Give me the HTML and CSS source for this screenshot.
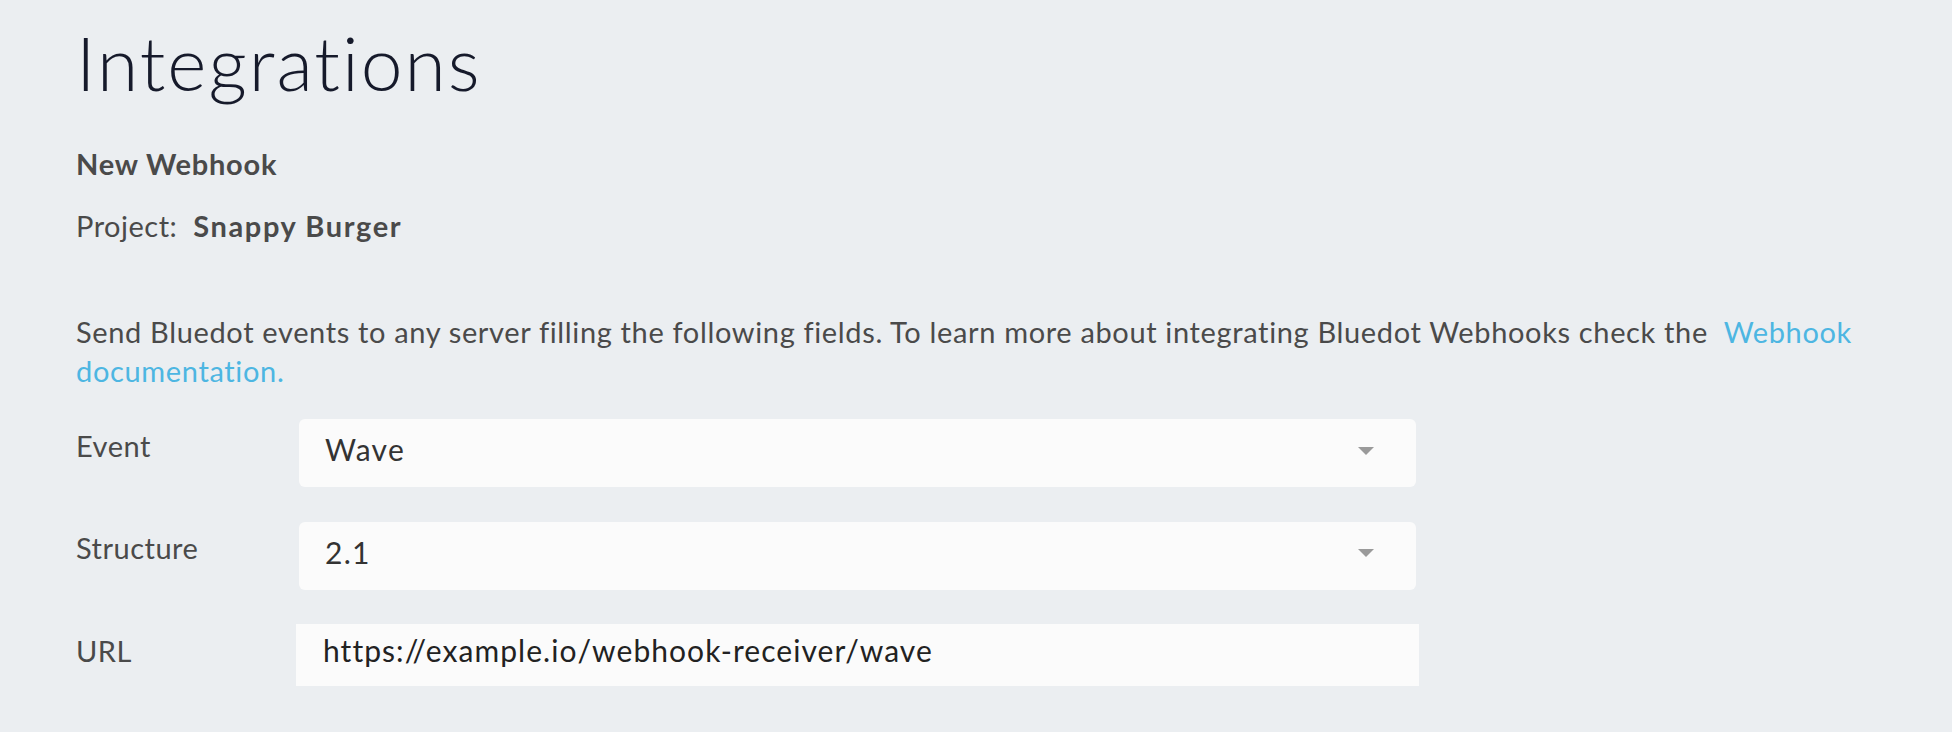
FILE: index.html
```html
<!DOCTYPE html>
<html lang="en">
<head>
<meta charset="utf-8">
<title>Integrations</title>
<link rel="stylesheet" href="styles.css">
</head>
<body>
<main class="page">
  <h1 class="title">Integrations</h1>
  <h2 class="subtitle">New Webhook</h2>
  <p class="project"><span class="project-label">Project:</span><strong class="project-name">Snappy Burger</strong></p>
  <p class="intro">Send Bluedot events to any server filling the following fields. To learn more about integrating Bluedot Webhooks check the&nbsp; <a class="link" href="#">Webhook documentation.</a></p>
  <div class="form">
    <div class="row">
      <span class="label">Event</span>
      <div class="select"><span class="select-value">Wave</span><span class="caret"></span></div>
    </div>
    <div class="row">
      <span class="label">Structure</span>
      <div class="select"><span class="select-value">2.1</span><span class="caret"></span></div>
    </div>
    <div class="row">
      <span class="label">URL</span>
      <div class="input">https://example.io/webhook-receiver/wave</div>
    </div>
  </div>
</main>
</body>
</html>
```
FILE: styles.css
```css
html, body {
  margin: 0;
  padding: 0;
  background: #ebeef1;
}
body {
  font-family: Lato, "Liberation Sans", sans-serif;
  color: #4a4a4a;
}
.page {
  padding: 17px 76px 0;
}
.title {
  margin: 0;
  font-weight: 300;
  font-size: 75px;
  line-height: 90px;
  letter-spacing: 2px;
  color: #161a2b;
}
.subtitle {
  margin: 39px 0 0;
  font-weight: 700;
  font-size: 29px;
  line-height: 36px;
  letter-spacing: 0.8px;
  color: #4a4a4a;
}
.project {
  margin: 26px 0 0;
  display: flex;
  gap: 16px;
  font-size: 29px;
  line-height: 36px;
}
.project-label {
  letter-spacing: 0.5px;
}
.project-name {
  font-weight: 700;
  letter-spacing: 1.6px;
}
.intro {
  margin: 69px 0 0;
  font-size: 29px;
  line-height: 38.5px;
  letter-spacing: 0.65px;
}
.link {
  color: #4db6e2;
  text-decoration: none;
}
.form {
  margin-top: 29px;
  display: flex;
  flex-direction: column;
  gap: 34.5px;
}
.row {
  display: grid;
  grid-template-columns: 220px auto;
  align-items: start;
}
.label {
  padding-top: 8.5px;
  font-size: 29px;
  line-height: 36px;
  letter-spacing: 0.5px;
  color: #4a4a4a;
}
.select {
  box-sizing: border-box;
  margin-left: 3px;
  width: 1117px;
  height: 68px;
  padding: 12px 42px 0 26px;
  background: #fbfbfb;
  border-radius: 6px;
  display: flex;
  justify-content: space-between;
  align-items: flex-start;
}
.select-value {
  font-size: 30px;
  line-height: 36px;
  letter-spacing: 1.3px;
  color: #333;
}
.caret {
  margin-top: 15.5px;
  width: 0;
  height: 0;
  border-left: 8px solid transparent;
  border-right: 8px solid transparent;
  border-top: 8px solid #9a9a9a;
}
.input {
  box-sizing: border-box;
  width: 1123px;
  height: 62px;
  padding: 8px 26px 0 27px;
  background: #fbfbfb;
  font-size: 30px;
  line-height: 36px;
  letter-spacing: 1.05px;
  color: #222;
}
```
